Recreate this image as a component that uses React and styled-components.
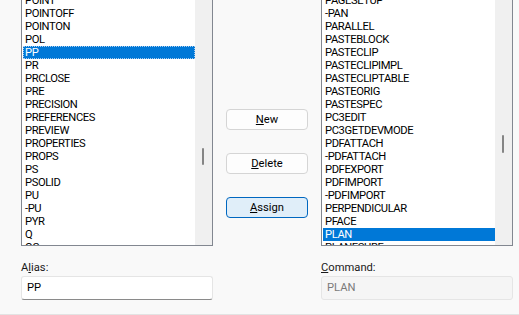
import React from 'react'
import styled, { createGlobalStyle } from 'styled-components'

const GlobalStyle = createGlobalStyle`
  html, body {
    margin: 0;
    padding: 0;
    background: #f9f9f9;
    overflow: hidden;
  }
  body {
    font-family: Roboto, "Liberation Sans", sans-serif;
    font-size: 11.2px;
    color: #000;
  }
`

const Dialog = styled.div`
  height: 315px;
  box-sizing: border-box;
  padding: 0 6px 0 21px;
  display: grid;
  grid-template-columns: 192px 108px 192px;
  grid-template-rows: 246px auto;
  border-bottom: 1px solid #e3e3e3;
`

// scrolled list: the top edge lies above the window
const ListBox = styled.div`
  display: flex;
  border: 1px solid #828790;
  border-top: none;
  background: #fff;
  overflow: hidden;
`

const Items = styled.div`
  flex: 1;
  padding-left: 1px;
  margin-top: -6px;
`

const Row = styled.div`
  height: 13px;
  line-height: 13px;
  padding-left: 2px;
  letter-spacing: -0.4px;
  white-space: nowrap;
  background: ${p => (p.$selected ? '#0078d7' : 'transparent')};
  color: ${p => (p.$selected ? '#fff' : '#000')};
  outline: ${p => (p.$focused ? '1px dotted #a9cdf0' : 'none')};
  outline-offset: -1px;
`

const Track = styled.div`
  width: 17px;
  background: #f0f0f0;
  display: flex;
  flex-direction: column;
`

const Thumb = styled.div`
  width: 2px;
  margin-left: 7px;
  border-radius: 1px;
  background: #858585;
`

const Buttons = styled.div`
  display: flex;
  flex-direction: column;
  align-items: center;
  gap: 23px;
  padding-top: 109px;
`

const Button = styled.button`
  width: 82px;
  height: 21px;
  box-sizing: border-box;
  padding: 0;
  font: inherit;
  color: #000;
  border-radius: 4px;
  border: 1px solid ${p => (p.$primary ? '#0067c0' : '#d5d5d5')};
  background: ${p => (p.$primary ? '#e0eef9' : '#fdfdfd')};
`

const Field = styled.div`
  display: flex;
  flex-direction: column;
  padding-top: 15px;
`

const Label = styled.div`
  height: 13px;
  line-height: 13px;
  margin-bottom: 2px;
  color: #1a1a1a;
`

const Input = styled.div`
  height: 24px;
  box-sizing: border-box;
  padding: 0 5px;
  line-height: 22px;
  border: 1px solid #e5e5e5;
  border-bottom-color: ${p => (p.$disabled ? '#e5e5e5' : '#8a8a8a')};
  border-radius: 3px;
  background: ${p => (p.$disabled ? '#f5f5f5' : '#fff')};
  color: ${p => (p.$disabled ? '#7a7a7a' : '#000')};
`

const aliases = ['POINT', 'POINTOFF', 'POINTON', 'POL', 'PP', 'PR', 'PRCLOSE', 'PRE', 'PRECISION',
  'PREFERENCES', 'PREVIEW', 'PROPERTIES', 'PROPS', 'PS', 'PSOLID', 'PU', '-PU', 'PYR', 'Q', 'QC']

const commands = ['PAGESETUP', '-PAN', 'PARALLEL', 'PASTEBLOCK', 'PASTECLIP', 'PASTECLIPIMPL',
  'PASTECLIPTABLE', 'PASTEORIG', 'PASTESPEC', 'PC3EDIT', 'PC3GETDEVMODE', 'PDFATTACH', '-PDFATTACH',
  'PDFEXPORT', 'PDFIMPORT', '-PDFIMPORT', 'PERPENDICULAR', 'PFACE', 'PLAN', 'PLANESURF']

const List = ({ items, selected, focused, thumbTop, thumbHeight }) => (
  <ListBox>
    <Items>
      {items.map(item => (
        <Row key={item} $selected={item === selected} $focused={focused && item === selected}>
          {item}
        </Row>
      ))}
    </Items>
    <Track>
      <Thumb style={{ marginTop: thumbTop, height: thumbHeight }} />
    </Track>
  </ListBox>
)

export default function App() {
  return (
    <>
      <GlobalStyle />
      <Dialog>
        <List items={aliases} selected="PP" focused thumbTop={148} thumbHeight={17} />
        <Buttons>
          <Button><u>N</u>ew</Button>
          <Button><u>D</u>elete</Button>
          <Button $primary><u>A</u>ssign</Button>
        </Buttons>
        <List items={commands} selected="PLAN" thumbTop={135} thumbHeight={18} />
        <Field>
          <Label>A<u>l</u>ias:</Label>
          <Input>PP</Input>
        </Field>
        <div />
        <Field>
          <Label><u>C</u>ommand:</Label>
          <Input $disabled>PLAN</Input>
        </Field>
      </Dialog>
    </>
  )
}
